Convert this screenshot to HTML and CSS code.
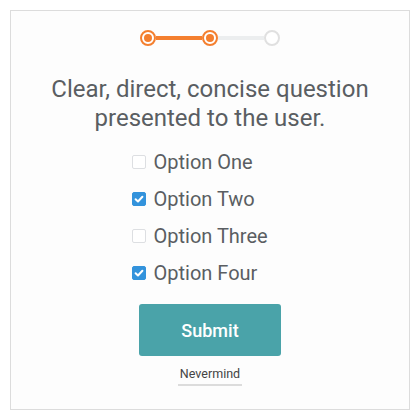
FILE: index.html
```html
<!DOCTYPE html>
<html>
<head>
<meta charset="utf-8">
<link rel="stylesheet" href="styles.css">
</head>
<body>
<div class="card">
  <div class="stepper">
    <span class="step done"></span>
    <span class="bar done"></span>
    <span class="step done"></span>
    <span class="bar"></span>
    <span class="step"></span>
  </div>
  <h1 class="question">Clear, direct, concise question presented to the user.</h1>
  <ul class="options">
    <li class="option"><span class="box"></span>Option One</li>
    <li class="option"><span class="box checked"><svg viewBox="0 0 14 14" width="14" height="14"><path d="M3.6 7.2 L6 9.5 L10.4 4.8" fill="none" stroke="#fff" stroke-width="2" stroke-linecap="round" stroke-linejoin="round"/></svg></span>Option Two</li>
    <li class="option"><span class="box"></span>Option Three</li>
    <li class="option"><span class="box checked"><svg viewBox="0 0 14 14" width="14" height="14"><path d="M3.6 7.2 L6 9.5 L10.4 4.8" fill="none" stroke="#fff" stroke-width="2" stroke-linecap="round" stroke-linejoin="round"/></svg></span>Option Four</li>
  </ul>
  <button class="submit">Submit</button>
  <a class="nevermind">Nevermind</a>
</div>
</body>
</html>
```
FILE: styles.css
```css
* { box-sizing: border-box; }
html, body { margin: 0; padding: 0; background: #fff; }
body { padding: 10px; font-family: Roboto, "Liberation Sans", sans-serif; }
.card {
  width: 400px;
  height: 400px;
  border: 1px solid #dcdcdc;
  background: #fdfdfd;
  display: flex;
  flex-direction: column;
  align-items: center;
  padding-top: 19px;
}
.stepper { display: flex; align-items: center; }
.step {
  width: 16px; height: 16px; border-radius: 50%;
  border: 2px solid #e0e0e0; background: #fff;
  display: flex; align-items: center; justify-content: center;
}
.step.done { border-color: #f47f2f; }
.step.done::after {
  content: ""; width: 8px; height: 8px; border-radius: 50%; background: #f47f2f;
}
.bar { width: 46px; height: 4px; background: #eceeef; }
.bar.done { background: #f47f2f; }
.question {
  margin: 29px 0 0;
  font-size: 24px; font-weight: 400; line-height: 29px;
  color: #5a5e62; text-align: center; width: 330px;
}
.options { list-style: none; margin: 10px 0 0 1px; padding: 0; width: 158px; }
.option {
  display: flex; align-items: center;
  font-size: 20px; color: #5a5e62; height: 37px;
}
.box {
  width: 14px; height: 14px; border: 1px solid #dddfe2; border-radius: 2px;
  background: #fff; margin-right: 8px; flex: none; display: flex;
}
.box.checked { background: #3393dc; border-color: #3393dc; }
.box svg { margin: -1px; }
.submit {
  margin-top: 13px;
  width: 142px; height: 52px; border: none; border-radius: 3px;
  background: #4aa3a9; color: #fff;
  font-family: Roboto, "Liberation Sans", sans-serif; font-size: 18px; font-weight: 500;
}
.nevermind {
  margin-top: 10px; font-size: 12.5px; color: #444;
  padding: 0 2px 3px; border-bottom: 2px solid #dcdcdc; line-height: 15px;
}
```
